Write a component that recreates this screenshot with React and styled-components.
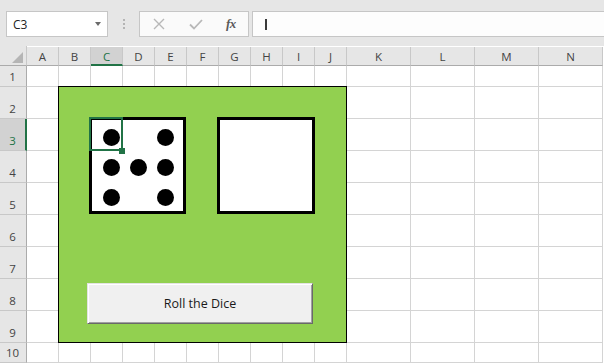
import React from "react";
import styled, { createGlobalStyle } from "styled-components";

const Global = createGlobalStyle`
  html, body { margin: 0; padding: 0; background: #ffffff; overflow: hidden; }
  body { font-family: "Open Sans", "Noto Sans", sans-serif; }
  * { box-sizing: border-box; }
`;

const Page = styled.div`
  width: 604px;
  height: 363px;
  overflow: hidden;
  display: flex;
  flex-direction: column;
`;

const Toolbar = styled.div`
  height: 46px;
  background: #e6e6e6;
  display: flex;
  align-items: flex-start;
  padding: 11px 0 0 6px;
  flex-shrink: 0;
`;

const NameBox = styled.div`
  width: 102px;
  height: 26px;
  background: #ffffff;
  border: 1px solid #c6c6c6;
  display: flex;
  align-items: center;
  justify-content: space-between;
  padding: 0 6px 0 6px;
  font-size: 12px;
  color: #222;
`;

const Caret = styled.span`
  width: 0;
  height: 0;
  border-left: 3.5px solid transparent;
  border-right: 3.5px solid transparent;
  border-top: 4px solid #6a6a6a;
`;

const Grip = styled.div`
  width: 31px;
  height: 26px;
  display: flex;
  flex-direction: column;
  align-items: center;
  justify-content: center;
  gap: 2px;
`;

const GripDot = styled.span`
  width: 2px;
  height: 2px;
  background: #b4b4b4;
`;

const FxGroup = styled.div`
  width: 110px;
  height: 26px;
  background: #fafafa;
  border: 1px solid #c6c6c6;
  display: flex;
  align-items: center;
  padding-left: 13px;
  gap: 24px;
  margin-right: 3px;
`;

const FxLabel = styled.span`
  font-family: "Liberation Serif", "DejaVu Serif", serif;
  font-style: italic;
  font-weight: bold;
  font-size: 13px;
  color: #5a5a5a;
  letter-spacing: -0.5px;
  margin-left: -1px;
`;

const FormulaInput = styled.div`
  flex: 1;
  height: 26px;
  background: #fdfdfd;
  border: 1px solid #c6c6c6;
  border-right: none;
  display: flex;
  align-items: center;
  padding-left: 12px;
`;

const TextCursor = styled.span`
  width: 1.5px;
  height: 11px;
  background: #3a3a3a;
`;

const SheetArea = styled.div`
  position: relative;
  flex: 1;
`;

const Grid = styled.div`
  display: grid;
  grid-template-columns: 27px repeat(10, 32px) repeat(4, 64px);
  grid-template-rows: 20px 21px repeat(8, 32px) 20px;
  font-size: 11.5px;
`;

const Corner = styled.div`
  background: #e6e6e6;
  border-right: 1px solid #c8c8c8;
  border-bottom: 1px solid #ababab;
  display: flex;
  align-items: flex-end;
  justify-content: flex-end;
  padding: 0 3px 2px 0;
`;

const ColHeader = styled.div`
  background: ${(p) => (p.$selected ? "#d2d2d2" : "#e6e6e6")};
  border-right: 1px solid #c8c8c8;
  border-bottom: ${(p) => (p.$selected ? "2px solid #217346" : "1px solid #ababab")};
  color: ${(p) => (p.$selected ? "#217346" : "#444444")};
  display: flex;
  align-items: center;
  justify-content: center;
  padding-top: ${(p) => (p.$selected ? "1px" : "0")};
  margin-top: 1px;
`;

const RowHeader = styled.div`
  background: ${(p) => (p.$selected ? "#d2d2d2" : "#e6e6e6")};
  border-right: ${(p) => (p.$selected ? "2px solid #217346" : "1px solid #ababab")};
  border-bottom: 1px solid #c8c8c8;
  color: ${(p) => (p.$selected ? "#217346" : "#444444")};
  display: flex;
  align-items: flex-end;
  justify-content: center;
  padding: 0 ${(p) => (p.$selected ? "0" : "1px")} 2px 0;
  line-height: 14px;
`;

const Cell = styled.div`
  background: #ffffff;
  border-right: 1px solid #d4d4d4;
  border-bottom: 1px solid #d4d4d4;
`;

const Shape = styled.div`
  position: absolute;
  left: 58px;
  top: 40px;
  width: 289px;
  height: 257px;
  background: #92d050;
  border: 1px solid #000000;
  display: flex;
  flex-direction: column;
  align-items: flex-start;
  padding: 30px 0 0 30px;
`;

const DiceRow = styled.div`
  display: flex;
  gap: 31px;
`;

const Die = styled.div`
  width: ${(p) => p.$w}px;
  height: 97px;
  background: #ffffff;
  border: 3px solid #000000;
  display: grid;
  grid-template-columns: repeat(3, 27px);
  grid-template-rows: repeat(3, 30px);
  padding: 2px 0 0 6px;
  align-items: center;
  justify-items: center;
`;

const Pip = styled.span`
  width: 17px;
  height: 17px;
  border-radius: 50%;
  background: #000000;
  grid-column: ${(p) => p.$c};
  grid-row: ${(p) => p.$r};
`;

const RollButton = styled.button`
  margin: 69px 0 0 -2px;
  width: 226px;
  height: 41px;
  background: #f0f0f0;
  border: 1px solid;
  border-color: #e3e3e3 #696969 #696969 #e3e3e3;
  box-shadow: inset 1px 1px 0 #ffffff, inset -1px -1px 0 #a0a0a0;
  font-family: "Open Sans", "Noto Sans", sans-serif;
  font-size: 12.5px;
  color: #1a1a1a;
  padding: 0;
  display: flex;
  align-items: center;
  justify-content: center;
  cursor: default;
`;

const Selection = styled.div`
  position: absolute;
  left: 89px;
  top: 71px;
  width: 34px;
  height: 34px;
  border: 2px solid #217346;
`;

const FillHandle = styled.span`
  position: absolute;
  right: -4px;
  bottom: -5px;
  width: 6px;
  height: 6px;
  background: #217346;
`;

const cols = ["A", "B", "C", "D", "E", "F", "G", "H", "I", "J", "K", "L", "M", "N"];
const rows = [1, 2, 3, 4, 5, 6, 7, 8, 9, 10];

const pips = [
  [1, 1], [3, 1],
  [1, 2], [2, 2], [3, 2],
  [1, 3], [3, 3],
];

export default function App() {
  return (
    <Page>
      <Global />
      <Toolbar>
        <NameBox>
          <span>C3</span>
          <Caret />
        </NameBox>
        <Grip>
          <GripDot />
          <GripDot />
          <GripDot />
        </Grip>
        <FxGroup>
          <svg width="12" height="12" viewBox="0 0 12 12">
            <path d="M1 1 L11 11 M11 1 L1 11" stroke="#b8b8b8" strokeWidth="1.4" fill="none" />
          </svg>
          <svg width="14" height="11" viewBox="0 0 14 11">
            <path d="M1 5.5 L5 9.5 L13 1" stroke="#b8b8b8" strokeWidth="1.8" fill="none" />
          </svg>
          <FxLabel>fx</FxLabel>
        </FxGroup>
        <FormulaInput>
          <TextCursor />
        </FormulaInput>
      </Toolbar>
      <SheetArea>
        <Grid>
          <Corner>
            <svg width="11" height="11" viewBox="0 0 11 11">
              <polygon points="11,0 11,11 0,11" fill="#b5b5b5" />
            </svg>
          </Corner>
          {cols.map((c) => (
            <ColHeader key={c} $selected={c === "C"}>{c}</ColHeader>
          ))}
          {rows.map((r) => (
            <React.Fragment key={r}>
              <RowHeader $selected={r === 3}>{r}</RowHeader>
              {cols.map((c) => (
                <Cell key={c + r} />
              ))}
            </React.Fragment>
          ))}
        </Grid>
        <Shape>
          <DiceRow>
            <Die $w={97}>
              {pips.map(([c, r]) => (
                <Pip key={c + "-" + r} $c={c} $r={r} />
              ))}
            </Die>
            <Die $w={98} />
          </DiceRow>
          <RollButton>Roll the Dice</RollButton>
        </Shape>
        <Selection>
          <FillHandle />
        </Selection>
      </SheetArea>
    </Page>
  );
}
